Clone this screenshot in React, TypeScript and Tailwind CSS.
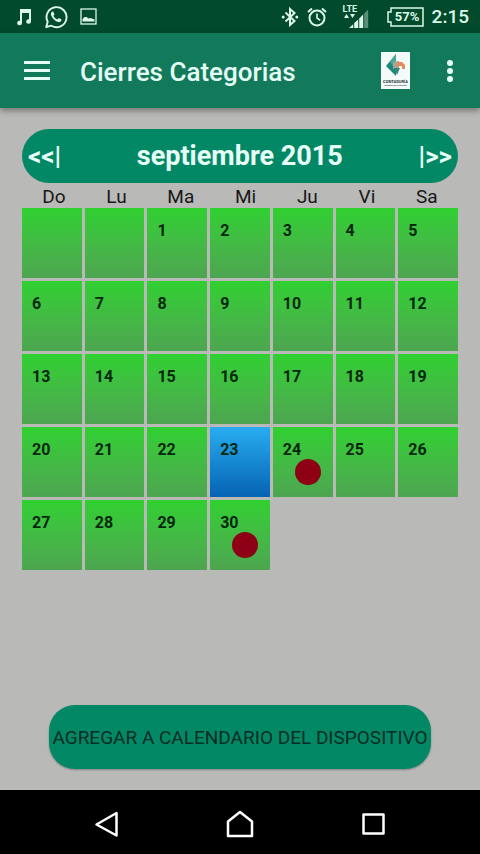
import React from 'react';

const weekdays = ["Do", "Lu", "Ma", "Mi", "Ju", "Vi", "Sa"];

// september 2015 starts on tuesday
const emptyDays = 2;
const totalDays = 30;
const selectedDay = 23;
const closingDays = [24, 30];

function StatusBar() {
  return (
    <div className="bg-[#024a2c] h-[33px] pl-4 pr-[11px] flex items-center justify-between text-[#dcf8e8]">
      <div className="flex items-center gap-3">
        <svg width="16" height="18" viewBox="0 0 16 18" fill="currentColor">
          <path d="M4 1h11v12.5a2.4 2.2 0 1 1-2-2.2V5H6v10a2.4 2.2 0 1 1-2-2.2z" />
        </svg>
        <svg width="24" height="24" viewBox="0 0 24 24" fill="none">
          <path d="M2.2 22l1.5-5.2A10 10 0 1 1 7.400 20.700z" stroke="currentColor" strokeWidth="1.900" strokeLinejoin="round" />
          <path d="M8.300 6.600c-1.500 1-1.700 2.600-1 4.200 1.200 2.900 3.600 5.200 6.600 6.200 1.900.5 3.500-.7 3.600-2.600l-2.700-1.500-1.500 1.500c-1.700-.7-3.100-2-3.900-3.700l1.100-1.300-1.100-2.700z" fill="currentColor" />
        </svg>
        <svg width="17" height="17" viewBox="0 0 17 17" fill="none">
          <rect x="1" y="1" width="15" height="15" stroke="currentColor" strokeWidth="1.300" />
          <path d="M2.500 13.500V11l2-2h2l2 1.500 2-.5 4 1.500v2z" fill="currentColor" />
        </svg>
      </div>
      <div className="flex items-center">
        <svg width="18" height="20" viewBox="0 0 18 20" fill="none" className="mr-2">
          <path d="M4.500 5.500l9 8.500-4.500 4V2l4.500 4-9 8.500" stroke="currentColor" strokeWidth="2" />
          <circle cx="2.200" cy="10" r="1.500" fill="currentColor" />
          <circle cx="15.800" cy="10" r="1.500" fill="currentColor" />
        </svg>
        <svg width="20" height="20" viewBox="0 0 20 20" fill="none" stroke="currentColor" className="mr-4">
          <circle cx="10" cy="11" r="7.500" strokeWidth="2" />
          <path d="M10 6.500V11l3.200 2.300" strokeWidth="1.600" />
          <path d="M1 5l4-3.500M19 5l-4-3.500" strokeWidth="2" />
        </svg>
        <div className="relative w-7 h-6 mr-4">
          <span className="absolute left-0 top-0 text-[9px] leading-[8px] font-bold">LTE</span>
          <svg width="28" height="24" viewBox="0 0 28 24" fill="currentColor">
            <path d="M1 13l2.500-4L6 13zM7 9h5l-2.500 4zM6 23l4.200-3.800V23zM11.200 23v-5l4-3.500V23zM16.200 23v-9.500l4-4V23z" />
            <path d="M21.200 23V8.500l4-4V23z" opacity=".4" />
          </svg>
        </div>
        <div className="relative w-[37px] h-5 mr-2 flex items-center justify-center">
          <svg width="37" height="20" viewBox="0 0 37 20" fill="none" className="absolute inset-0">
            <path d="M4 1h32v18H4v-4H1V5h3z" stroke="currentColor" strokeWidth="1.500" />
          </svg>
          <span className="pl-1 text-[13px] leading-4 font-bold">57%</span>
        </div>
        <span className="text-[19px] leading-6 font-medium">2:15</span>
      </div>
    </div>
  );
}

function Logo() {
  return (
    <svg width="29" height="37" viewBox="0 0 29 37">
      <rect width="29" height="37" fill="#f4faf8" />
      <path d="M15 2v8l-3 4 3 3v7L5 14z" fill="#178a78" />
      <path d="M15 2v8l-3 4-3-4z" fill="#4aa897" />
      <path d="M12 10l6-1v8h-6z" fill="#a9a396" />
      <path d="M16 10h5l3 3v4h-3v-3h-5z" fill="#e58a58" />
      <path d="M13 16h6l-3 7z" fill="#3a8579" />
      <text x="14.500" y="31" fontSize="4" fontWeight="700" textAnchor="middle" fill="#26343a">CONTADURÍA</text>
      <text x="14.500" y="34" fontSize="2" fontWeight="700" textAnchor="middle" fill="#26343a">GENERAL DE LA NACIÓN</text>
    </svg>
  );
}

function Header() {
  return (
    <header className="relative bg-[#127a5b] h-[75px] pl-6 pr-4 flex items-center text-[#e6fdf5] shadow-[0_3px_6px_rgba(0,0,0,0.35)]">
      <button aria-label="Menú" className="w-[26px] flex flex-col gap-[5px]">
        <span className="h-[3px] w-full bg-current"></span>
        <span className="h-[3px] w-full bg-current"></span>
        <span className="h-[3px] w-full bg-current"></span>
      </button>
      <h1 className="ml-[30px] pt-[2px] flex-1 text-[26px] leading-8 font-medium">Cierres Categorias</h1>
      <Logo />
      <button aria-label="Más opciones" className="ml-[26px] w-7 flex flex-col items-center gap-[2px]">
        <span className="size-[6px] rounded-full bg-current"></span>
        <span className="size-[6px] rounded-full bg-current"></span>
        <span className="size-[6px] rounded-full bg-current"></span>
      </button>
    </header>
  );
}

function Day({ day }: { day: number }) {
  return (
    <button
      className={
        day === selectedDay
          ? "relative h-[70px] pl-[10px] pt-[13px] flex items-start bg-linear-to-b from-[#29adf0] to-[#0763b4]"
          : "relative h-[70px] pl-[10px] pt-[13px] flex items-start bg-linear-to-b from-[#2fd030] to-[#4da550]"
      }
    >
      <span className="text-base leading-5 font-bold text-[#06280f]">{day}</span>
      {closingDays.includes(day) && (
        <span className="absolute right-3 bottom-3 size-[26px] rounded-full bg-[#8d0016]"></span>
      )}
    </button>
  );
}

export default function App() {
  const days = Array.from({ length: totalDays }, (_, i) => i + 1);

  return (
    <div className="min-h-screen flex flex-col bg-[#b9b9b7] font-[Roboto,sans-serif]">
      <StatusBar />
      <Header />

      <main className="flex-1 flex flex-col px-[22px] pt-[21px] pb-[21px]">
        <div className="h-[54px] px-[6px] rounded-full bg-[#038866] flex items-center justify-between text-[27px] leading-8 font-bold text-[#e8fff8]">
          <button aria-label="Mes anterior" className="text-[26px]">&lt;&lt;|</button>
          <h2>septiembre 2015</h2>
          <button aria-label="Mes siguiente" className="text-[26px]">|&gt;&gt;</button>
        </div>

        <div className="h-[25px] pt-[2px] flex items-center justify-around text-[19px] leading-6 text-[#181818]">
          {weekdays.map((name) => (
            <span key={name}>{name}</span>
          ))}
        </div>

        <div className="grid grid-cols-7 gap-[3px]">
          {Array.from({ length: emptyDays }, (_, i) => (
            <div key={i} className="h-[70px] bg-linear-to-b from-[#2fd030] to-[#4da550]"></div>
          ))}
          {days.map((day) => (
            <Day key={day} day={day} />
          ))}
        </div>

        <button className="mt-auto mx-[27px] h-16 pt-[2px] rounded-[26px] bg-[#038866] text-[19px] leading-6 whitespace-nowrap text-[#052e24] shadow-[0_1px_2px_rgba(0,0,0,0.3)]">
          AGREGAR A CALENDARIO DEL DISPOSITIVO
        </button>
      </main>

      {/* android navigation bar */}
      <nav className="h-16 bg-black px-[93px] pt-1 flex items-center justify-between text-white">
        <button aria-label="Atrás">
          <svg width="28" height="28" viewBox="0 0 28 28" fill="none" stroke="currentColor" strokeWidth="2.500" strokeLinejoin="round">
            <path d="M23.500 3v22.500L3.500 14.500z" />
          </svg>
        </button>
        <button aria-label="Inicio">
          <svg width="28" height="28" viewBox="0 0 28 28" fill="none" stroke="currentColor" strokeWidth="2.500" strokeLinejoin="round">
            <path d="M2 11.500L14 2l12 9.500V26H2z" />
          </svg>
        </button>
        <button aria-label="Recientes">
          <svg width="28" height="28" viewBox="0 0 28 28" fill="none" stroke="currentColor" strokeWidth="2.500" strokeLinejoin="round">
            <rect x="4.500" y="4.500" width="20" height="19" />
          </svg>
        </button>
      </nav>
    </div>
  );
}
